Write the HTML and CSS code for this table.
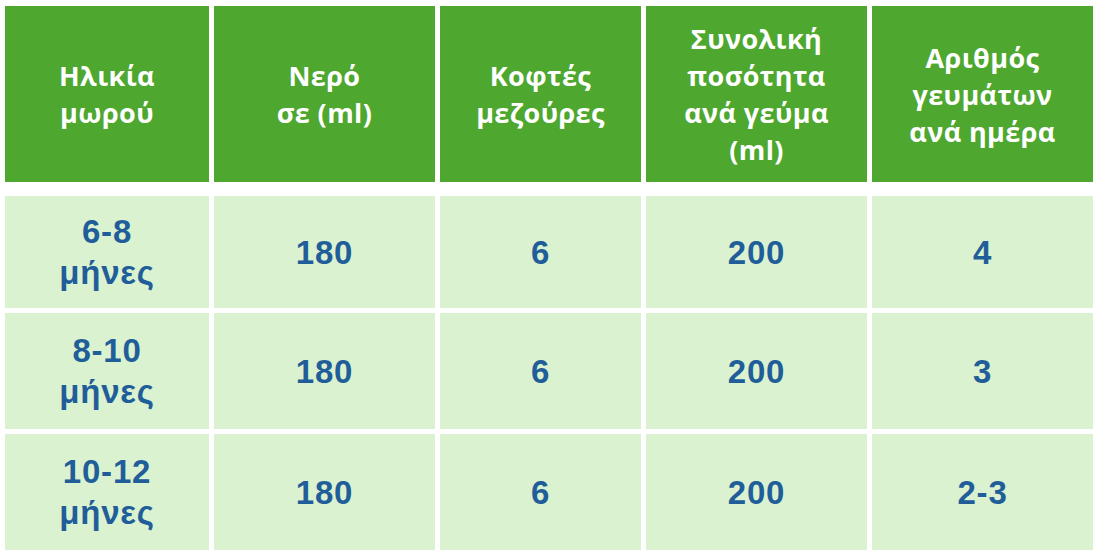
FILE: index.html
```html
<!DOCTYPE html>
<html lang="el">
<head>
<meta charset="utf-8">
<title>Πίνακας γευμάτων</title>
<link rel="stylesheet" href="styles.css">
</head>
<body>
<div class="table">
  <div class="row head">
    <div class="cell">Ηλικία<br>μωρού</div>
    <div class="cell">Νερό<br>σε (ml)</div>
    <div class="cell">Κοφτές<br>μεζούρες</div>
    <div class="cell">Συνολική<br>ποσότητα<br>ανά γεύμα<br>(ml)</div>
    <div class="cell">Αριθμός<br>γευμάτων<br>ανά ημέρα</div>
  </div>
  <div class="row data first">
    <div class="cell">6-8<br>μήνες</div>
    <div class="cell">180</div>
    <div class="cell">6</div>
    <div class="cell">200</div>
    <div class="cell">4</div>
  </div>
  <div class="row data">
    <div class="cell">8-10<br>μήνες</div>
    <div class="cell">180</div>
    <div class="cell">6</div>
    <div class="cell">200</div>
    <div class="cell">3</div>
  </div>
  <div class="row data">
    <div class="cell">10-12<br>μήνες</div>
    <div class="cell">180</div>
    <div class="cell">6</div>
    <div class="cell">200</div>
    <div class="cell">2-3</div>
  </div>
</div>
</body>
</html>
```
FILE: styles.css
```css
html, body {
  margin: 0;
  padding: 0;
  background: #ffffff;
}

body {
  padding: 6px 0 0 5px;
}

.table {
  display: flex;
  flex-direction: column;
  gap: 5px;
  width: 1088px;
}

.row {
  display: grid;
  grid-template-columns: 204px 221px 201px 221px 221px;
  column-gap: 5px;
}

.cell {
  display: flex;
  align-items: center;
  justify-content: center;
  text-align: center;
}

.head {
  height: 176px;
  margin-bottom: 9px;
}

.head .cell {
  background: #4ea72e;
  color: #ffffff;
  font-family: "Open Sans", "Noto Sans", sans-serif;
  font-weight: 700;
  font-size: 27px;
  line-height: 37px;
  letter-spacing: 0.4px;
}

.data {
  height: 116px;
}

.data.first {
  height: 112px;
}

.data .cell {
  background: #daf2d0;
  color: #215e99;
  font-family: "Liberation Sans", Arial, sans-serif;
  font-weight: 700;
  font-size: 33px;
  line-height: 41px;
  letter-spacing: 0.8px;
}
```
